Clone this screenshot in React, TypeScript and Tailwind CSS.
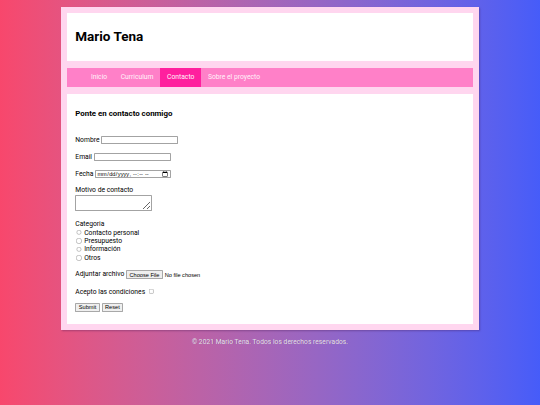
import { useState } from 'react';

const navItems = ['Inicio', 'Curriculum', 'Contacto', 'Sobre el proyecto'];
const categorias = ['Contacto personal', 'Presupuesto', 'Información', 'Otros'];

const control =
  "border border-solid border-[#a3a3a3] rounded-[2px] bg-white px-[2px] py-[1px] text-[13.33px] font-['Liberation_Sans',Arial,sans-serif] text-black";
const button =
  "h-[21px] px-[6px] border border-solid border-[#a8a8a8] rounded-[2px] bg-[#efefef] text-[13.33px] leading-none font-['Liberation_Sans',Arial,sans-serif] text-black";

export default function App() {
  const [categoria, setCategoria] = useState('');

  return (
    // Page is laid out at 1280px and scaled down to the 540px window
    <div className="[zoom:0.421875] w-[1280px] min-h-[960px] bg-gradient-to-r from-[#f8476c] to-[#465cf9] pt-[16px] font-['Roboto','Liberation_Sans',sans-serif] text-black">
      <div className="w-[991px] mx-auto bg-[#ffd6ef] p-[15px] flex flex-col gap-[15px] shadow-[2px_2px_4px_rgba(60,20,80,0.35)]">
        {/* Header */}
        <header className="bg-white px-[19px] py-[17px]">
          <h1 className="text-[32px] font-bold leading-[37.5px] my-[21.44px]">Mario Tena</h1>
        </header>

        {/* Nav */}
        <nav className="bg-[#ff80c8]">
          <ul className="flex pl-[40px]">
            {navItems.map((item) => (
              <li key={item}>
                <a
                  href="#"
                  className={`block px-[16px] h-[47px] leading-[47px] text-[16px] text-[#fff2fa] ${
                    item === 'Contacto' ? 'bg-[#ff1f9e]' : ''
                  }`}
                >
                  {item}
                </a>
              </li>
            ))}
          </ul>
        </nav>

        {/* Form */}
        <main className="bg-white px-[19px] pt-[36px] pb-[27px] text-[16px]">
          <h3 className="text-[18.72px] font-bold leading-[22px]">Ponte en contacto conmigo</h3>

          <form className="flex flex-col" onSubmit={(e) => e.preventDefault()}>
            <div className="flex items-center h-[24px] mt-[40px]">
              <label>Nombre</label>
              <input type="text" className={`${control} ml-[4px] w-[183px] h-[19px]`} />
            </div>

            <div className="flex items-center h-[24px] mt-[16.5px]">
              <label>Email</label>
              <input type="email" className={`${control} ml-[4px] w-[183px] h-[19px]`} />
            </div>

            <div className="flex items-center h-[24px] mt-[16px]">
              <label>Fecha</label>
              <input type="datetime-local" className={`${control} ml-[4px] w-[179px] h-[19px]`} />
            </div>

            <label className="leading-[19px] mt-[16.5px]">Motivo de contacto</label>
            <textarea className={`${control} mt-[3px] w-[182px] h-[38px]`} />

            <span className="leading-[19px] mt-[21px]">Categoria</span>
            <div className="flex flex-col">
              {categorias.map((c) => (
                <label key={c} className="flex items-center h-[20px]">
                  <input
                    type="radio"
                    name="categoria"
                    checked={categoria === c}
                    onChange={() => setCategoria(c)}
                    className="w-[13px] h-[13px] ml-[2px] mr-[6px]"
                  />
                  {c}
                </label>
              ))}
            </div>

            <div className="flex items-center h-[24px] mt-[17.5px]">
              <label>Adjuntar archivo</label>
              <input
                type="file"
                className="ml-[4px] text-[13.33px] font-['Liberation_Sans',Arial,sans-serif] file:h-[21px] file:px-[6px] file:mr-[4px] file:border file:border-solid file:border-[#a8a8a8] file:rounded-[2px] file:bg-[#efefef] file:text-black"
              />
            </div>

            <div className="flex items-center h-[24px] mt-[16.5px]">
              <label>Acepto las condiciones</label>
              <input type="checkbox" className="w-[13px] h-[13px] ml-[8px]" />
            </div>

            <div className="flex items-center gap-[4px] h-[22px] mt-[15px]">
              <button type="submit" className={button}>Submit</button>
              <button type="reset" className={button}>Reset</button>
            </div>
          </form>
        </main>
      </div>

      <footer className="text-center mt-[16px] text-[16px] text-[#ece4f2] [text-shadow:1px_1px_1px_rgba(60,30,80,0.5)]">
        © 2021 Mario Tena. Todos los derechos reservados.
      </footer>
    </div>
  );
}
